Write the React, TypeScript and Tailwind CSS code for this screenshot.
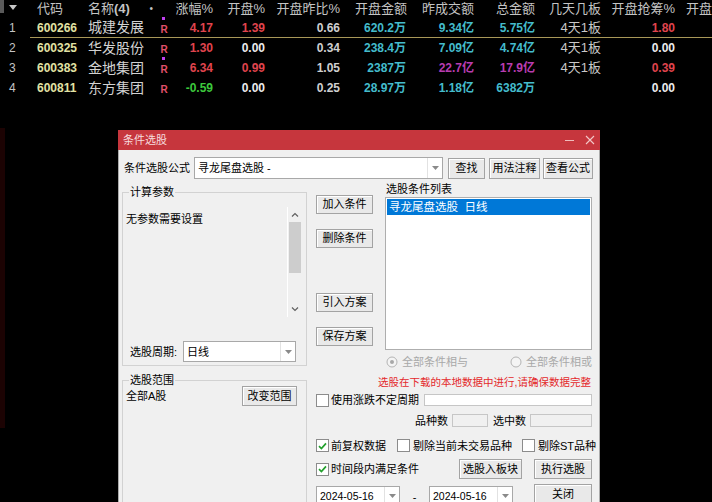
import clsx from "clsx";
import type { ReactNode } from "react";

const font = "font-['Liberation_Sans','Noto_Sans_CJK_SC',sans-serif]";

const tone = {
  r: "text-[#e0444e]",
  w: "text-[#ececec]",
  g: "text-[#3cc83c]",
  c: "text-[#44bccc]",
  m: "text-[#b83cb0]",
  s: "text-[#cfcfcf]",
};

type Tone = keyof typeof tone;

const rows: {
  no: string;
  code: string;
  name: string;
  dot: boolean;
  chg: [string, Tone];
  open: [string, Tone];
  ratio: string;
  amt: string;
  prev: [string, Tone];
  total: [string, Tone];
  board: string;
  grab: [string, Tone];
}[] = [
  { no: "1", code: "600266", name: "城建发展", dot: true, chg: ["4.17", "r"], open: ["1.39", "r"], ratio: "0.66", amt: "620.2万", prev: ["9.34亿", "c"], total: ["5.75亿", "c"], board: "4天1板", grab: ["1.80", "r"] },
  { no: "2", code: "600325", name: "华发股份", dot: false, chg: ["1.30", "r"], open: ["0.00", "w"], ratio: "0.34", amt: "238.4万", prev: ["7.09亿", "c"], total: ["4.74亿", "c"], board: "4天1板", grab: ["0.00", "w"] },
  { no: "3", code: "600383", name: "金地集团", dot: true, chg: ["6.34", "r"], open: ["0.99", "r"], ratio: "1.05", amt: "2387万", prev: ["22.7亿", "m"], total: ["17.9亿", "m"], board: "4天1板", grab: ["0.39", "r"] },
  { no: "4", code: "600811", name: "东方集团", dot: false, chg: ["-0.59", "g"], open: ["0.00", "w"], ratio: "0.25", amt: "28.97万", prev: ["1.18亿", "c"], total: ["6382万", "c"], board: "", grab: ["0.00", "w"] },
];

function Arrow() {
  return (
    <svg width="7" height="4" viewBox="0 0 7 4">
      <path d="M0 0h7L3.5 4z" fill="#8a8a8a" />
    </svg>
  );
}

function Btn({ children, className }: { children: ReactNode; className?: string }) {
  return (
    <div
      className={clsx(
        "flex shrink-0 items-center justify-center border border-[#a3a3a3] bg-[#e9e9e9] text-[11px] leading-none text-black shadow-[inset_1px_1px_0_#ffffff]",
        className,
      )}
    >
      {children}
    </div>
  );
}

function Combo({ text, className, textClass }: { text: string; className?: string; textClass?: string }) {
  return (
    <div className={clsx("flex shrink-0 items-center border border-[#a8a8a8] bg-white", className)}>
      <span className={clsx("flex-1 truncate pl-[3px] text-black", textClass)}>{text}</span>
      <span className="flex h-full w-[15px] items-center justify-center border-l border-[#e2e2e2]">
        <Arrow />
      </span>
    </div>
  );
}

function Check({ checked }: { checked?: boolean }) {
  return (
    <span className="flex h-[13px] w-[13px] shrink-0 items-center justify-center border border-[#8c8c8c] bg-white">
      {checked ? (
        <svg width="9" height="8" viewBox="0 0 9 8">
          <path d="M1 4.2L3.4 6.5L8 1.4" stroke="#22a02c" strokeWidth="1.7" fill="none" />
        </svg>
      ) : null}
    </span>
  );
}

function Radio({ on }: { on?: boolean }) {
  return (
    <svg width="12" height="12" viewBox="0 0 12 12" className="shrink-0">
      <circle cx="6" cy="6" r="5" stroke="#b4b4b4" fill="#f4f4f4" />
      {on ? <circle cx="6" cy="6" r="2" fill="#a8a8a8" /> : null}
    </svg>
  );
}

function Quote() {
  return (
    <div className={clsx(font, "select-none")}>
      <div className="flex h-[18px] items-center whitespace-nowrap text-[13px] leading-[18px] text-[#c4c4c4]">
        <div className="flex h-full w-[37px] items-start">
          <span className="h-[13px] w-[4px] bg-[#5a5a5a]" />
          <span className="ml-[5px] mt-[5px]">
            <svg width="8" height="5" viewBox="0 0 8 5">
              <path d="M0 0h8L4 5z" fill="#c8c8c8" />
            </svg>
          </span>
        </div>
        <div className="w-[51px]">代码</div>
        <div className="flex w-[68px] items-center">
          <span>
            名称<span className="font-bold">(4)</span>
          </span>
          <span className="ml-auto pr-[3px] text-[10px]">•</span>
        </div>
        <div className="w-[16px]" />
        <div className="w-[41px] text-right">涨幅%</div>
        <div className="w-[52px] text-right">开盘%</div>
        <div className="w-[75px] text-right">开盘昨比%</div>
        <div className="w-[67px] text-right">开盘金额</div>
        <div className="w-[67px] text-right">昨成交额</div>
        <div className="w-[61px] text-right">总金额</div>
        <div className="w-[66px] text-right">几天几板</div>
        <div className="w-[74px] text-right">开盘抢筹%</div>
        <div className="pl-[11px]">开盘</div>
      </div>
      {rows.map((row, index) => (
        <div key={row.code}>
          <div
            className={clsx(
              "flex items-center text-[12px] font-bold",
              index === 0 ? "h-[19px]" : "h-[20px]",
            )}
          >
            <div className="w-[37px] pl-[9px] font-normal text-[#c4c4c4]">{row.no}</div>
            <div className="w-[51px] text-[#e2e2a4]">{row.code}</div>
            <div className="w-[68px] text-[14px] font-normal text-[#d2d2d2]">{row.name}</div>
            <div className="relative flex w-[16px] justify-center pt-[3px] text-[10px] text-[#e0506a]">
              {row.dot ? <span className="absolute left-[6px] top-[-2px] h-[3px] w-[3px] bg-[#c040f0]" /> : null}
              R
            </div>
            <div className={clsx("w-[41px] text-right", tone[row.chg[1]])}>{row.chg[0]}</div>
            <div className={clsx("w-[52px] text-right", tone[row.open[1]])}>{row.open[0]}</div>
            <div className={clsx("w-[75px] text-right", tone.s)}>{row.ratio}</div>
            <div className={clsx("w-[66px] text-right", tone.c)}>{row.amt}</div>
            <div className={clsx("w-[68px] text-right", tone[row.prev[1]])}>{row.prev[0]}</div>
            <div className={clsx("w-[61px] text-right", tone[row.total[1]])}>{row.total[0]}</div>
            <div className="w-[66px] text-right text-[13px] font-normal text-[#c8c8c8]">{row.board}</div>
            <div className={clsx("w-[74px] text-right", tone[row.grab[1]])}>{row.grab[0]}</div>
          </div>
          {index === 0 ? <div className="ml-[30px] h-px bg-[#a89858]" /> : null}
        </div>
      ))}
      <div className="mt-[30px] h-[300px] w-[5px] bg-[#1c0303]" />
    </div>
  );
}

function Dialog() {
  return (
    <div className={clsx(font, "absolute left-[118px] top-[130px] flex h-[390px] w-[482px] flex-col text-[11px] leading-[14px] text-black")}>
      <div className="flex h-[20px] shrink-0 items-center bg-[#c6363d] pl-[5px] pr-[5px]">
        <span className="text-[11px] text-[#f6dddd]">条件选股</span>
        <span className="ml-auto h-px w-[9px] bg-[#efbcbc]" />
        <svg width="10" height="10" viewBox="0 0 10 10" className="ml-[11px]">
          <path d="M1 1L9 9M9 1L1 9" stroke="#f2c8c8" strokeWidth="1.1" />
        </svg>
      </div>
      <div className="flex-1 border-x border-[#ababab] bg-[#f0f0f0] pl-[3px] pt-[7px]">
        <div className="flex h-[22px] items-center">
          <span className="w-[72px] pl-[2px]">条件选股公式</span>
          <Combo text="寻龙尾盘选股  -" className="h-[22px] w-[249px]" />
          <Btn className="ml-[5px] h-[21px] w-[37px]">查找</Btn>
          <Btn className="ml-[4px] h-[21px] w-[51px]">用法注释</Btn>
          <Btn className="ml-[3px] h-[21px] w-[50px]">查看公式</Btn>
        </div>

        <div className="mt-[3px] flex">
          <div className="flex w-[185px] shrink-0 flex-col">
            <fieldset className="mt-[4px] h-[180px] border border-[#d2d2d2]">
              <legend className="ml-[6px] px-[1px] leading-[12px]">计算参数</legend>
              <div className="flex">
                <div className="flex-1 pl-[3px] pt-[14px]">无参数需要设置</div>
                <div className="mr-[4px] mt-[9px] flex h-[110px] w-[15px] flex-col border-l border-white bg-[#f0f0f0]">
                  <div className="flex h-[15px] items-center justify-center">
                    <svg width="8" height="5" viewBox="0 0 8 5">
                      <path d="M1 4.5L4 1.5L7 4.5" stroke="#606060" strokeWidth="1.2" fill="none" />
                    </svg>
                  </div>
                  <div className="mx-px h-[51px] bg-[#cdcdcd]" />
                  <div className="flex-1" />
                  <div className="flex h-[15px] items-center justify-center">
                    <svg width="8" height="5" viewBox="0 0 8 5">
                      <path d="M1 0.5L4 3.5L7 0.5" stroke="#606060" strokeWidth="1.2" fill="none" />
                    </svg>
                  </div>
                </div>
              </div>
              <div className="mt-[24px] flex h-[21px] items-center pl-[7px]">
                <span className="w-[53px]">选股周期:</span>
                <Combo text="日线" className="h-[21px] w-[113px]" />
              </div>
            </fieldset>
            <fieldset className="mt-[8px] h-[140px] border border-[#d2d2d2]">
              <legend className="ml-[6px] px-[1px] leading-[12px]">选股范围</legend>
              <div className="flex h-[20px] items-center">
                <span className="pl-[3px]">全部A股</span>
                <Btn className="ml-auto mr-[9px] h-[20px] w-[55px]">改变范围</Btn>
              </div>
            </fieldset>
          </div>

          <div className="ml-[9px] flex w-[277px] shrink-0 flex-col whitespace-nowrap">
            <div className="flex">
              <div className="flex w-[57px] shrink-0 flex-col pt-[13px]">
                <Btn className="h-[19px]">加入条件</Btn>
                <Btn className="mt-[15px] h-[19px]">删除条件</Btn>
                <Btn className="mt-[45px] h-[19px]">引入方案</Btn>
                <Btn className="mt-[15px] h-[19px]">保存方案</Btn>
              </div>
              <div className="ml-[12px] flex w-[207px] flex-col">
                <span className="h-[14px] pl-[1px]">选股条件列表</span>
                <div className="mt-px h-[153px] border border-[#aeaeae] bg-white p-px">
                  <div className="h-[16px] bg-[#0078d7] pl-[2px] text-[11.5px] leading-[16px] text-white">
                    寻龙尾盘选股&nbsp;&nbsp;日线
                  </div>
                </div>
                <div className="mt-[5px] flex h-[14px] items-center text-[#a8a8a8]">
                  <div className="flex w-[125px] items-center gap-[4px] pl-[1px]">
                    <Radio on />
                    <span>全部条件相与</span>
                  </div>
                  <div className="flex items-center gap-[4px]">
                    <Radio />
                    <span>全部条件相或</span>
                  </div>
                </div>
              </div>
            </div>

            <div className="mt-[7px] h-[13px] pr-[2px] text-right text-[10.5px] leading-[13px] text-[#e42a2c]">
              选股在下载的本地数据中进行,请确保数据完整
            </div>

            <div className="mt-[4px] flex h-[14px] items-center">
              <Check />
              <span className="ml-[2px]">使用涨跌不定周期</span>
              <span className="ml-auto mr-px h-[12px] w-[168px] border border-[#c6c6c6] bg-white" />
            </div>

            <div className="mt-[7px] flex h-[13px] items-center justify-end pr-px">
              <span>品种数</span>
              <span className="ml-[4px] h-[13px] w-[36px] border border-[#c6c6c6] bg-[#f0f0f0]" />
              <span className="ml-[5px]">选中数</span>
              <span className="ml-[4px] h-[13px] w-[62px] border border-[#c6c6c6] bg-[#f0f0f0]" />
            </div>

            <div className="mt-[12px] flex h-[13px] items-center">
              <div className="flex w-[81px] shrink-0 items-center">
                <Check checked />
                <span className="ml-[2px]">前复权数据</span>
              </div>
              <div className="flex w-[125px] shrink-0 items-center">
                <Check />
                <span className="ml-[3px]">剔除当前未交易品种</span>
              </div>
              <div className="flex shrink-0 items-center">
                <Check />
                <span className="ml-[3px]">剔除ST品种</span>
              </div>
            </div>

            <div className="mt-[7px] flex h-[20px] items-center">
              <Check checked />
              <span className="ml-[2px]">时间段内满足条件</span>
              <Btn className="ml-auto h-[20px] w-[63px]">选股入板块</Btn>
              <Btn className="ml-[12px] mr-px h-[20px] w-[58px]">执行选股</Btn>
            </div>

            <div className="mt-[5px] flex items-start">
              <Combo text="2024-05-16" className="mt-[2px] h-[20px] w-[84px]" textClass="text-[10.5px]" />
              <span className="w-[29px] pt-[6px] text-center leading-[14px]">-</span>
              <Combo text="2024-05-16" className="mt-[2px] h-[20px] w-[84px]" textClass="text-[10.5px]" />
              <Btn className="ml-auto mr-px h-[21px] w-[58px]">关闭</Btn>
            </div>
          </div>
        </div>
      </div>
    </div>
  );
}

export default function App() {
  return (
    <div className="relative h-[502px] w-[712px] overflow-hidden bg-black">
      <Quote />
      <Dialog />
    </div>
  );
}
